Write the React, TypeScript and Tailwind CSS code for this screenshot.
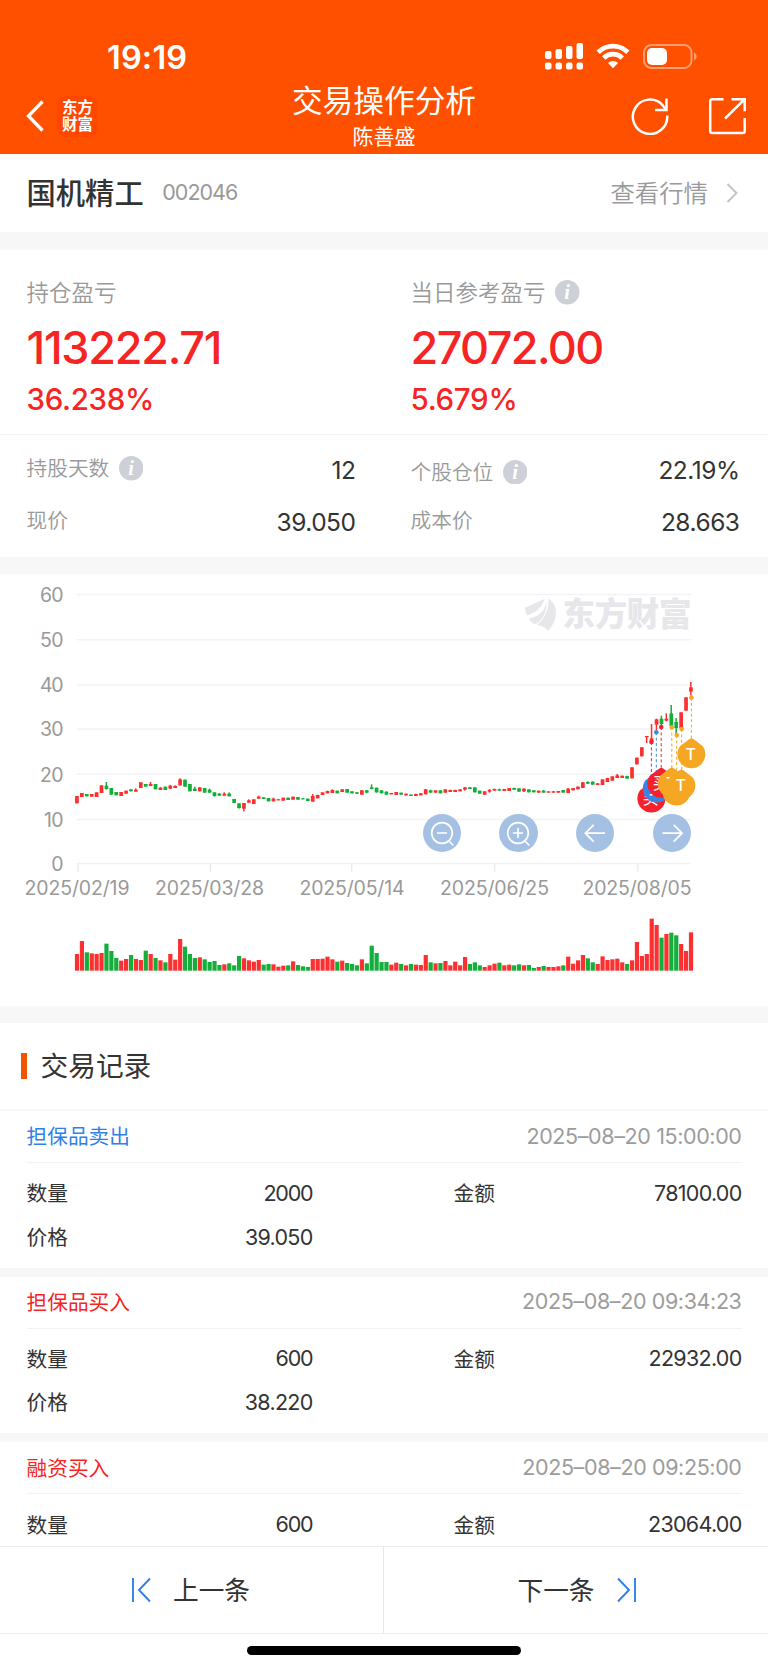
import React from "react";

const FONT = "font-['Inter','Noto_Sans_CJK_SC',sans-serif]";

/* Each day: colour, body top, body bottom, wick top, wick bottom, volume top (chart units, 3 per pixel). */
type Day = [string, number, number, number, number, number];
const DAYS: Day[] = [
  ["r",678,700,678,700,1152],["r",669,681,669,681,1113],["g",672,679,672,679,1147],["r",672,680,672,680,1150],["r",667,681,667,681,1152],
  ["r",646,669,646,669,1149],["g",647,657,636,659,1121],["g",654,674,654,674,1143],["g",666,676,666,676,1164],["r",666,678,666,678,1172],
  ["r",662,671,662,671,1167],["g",658,664,658,664,1155],["r",659,665,655,665,1167],["r",637,654,637,654,1170],["g",642,650,642,650,1142],
  ["r",642,648,636,648,1152],["g",642,658,642,658,1164],["r",653,660,651,660,1171],["g",650,660,650,660,1177],["r",647,656,645,657,1152],
  ["r",648,654,646,654,1169],["r",628,646,625,647,1107],["g",629,650,629,650,1130],["g",642,664,642,664,1152],["g",656,663,650,663,1164],
  ["r",652,664,652,664,1162],["g",654,668,654,668,1168],["g",659,668,656,668,1176],["g",667,678,667,680,1173],["g",671,677,669,677,1185],
  ["r",671,677,667,677,1183],["g",671,679,667,679,1180],["g",687,699,687,699,1186],["g",700,714,700,716,1158],["r",699,716,699,724,1165],
  ["r",691,698,688,698,1171],["r",688,702,688,702,1175],["r",680,686,677,686,1170],["g",682,687,682,687,1184],["g",684,694,684,694,1182],
  ["r",686,694,683,694,1183],["r",688,691,687,691,1190],["r",683,692,683,692,1187],["g",683,690,683,690,1186],["r",680,689,680,689,1174],
  ["g",681,689,681,689,1185],["g",685,688,684,688,1189],["g",686,693,686,693,1191],["r",678,695,672,695,1167],["r",675,685,674,685,1167],
  ["r",667,675,667,675,1166],["r",663,670,662,670,1160],["r",660,669,658,669,1168],["g",662,670,662,670,1175],["r",658,666,658,666,1172],
  ["g",657,668,657,668,1179],["g",664,670,664,670,1182],["g",667,671,666,672,1186],["r",661,674,660,674,1168],["g",661,668,660,670,1180],
  ["g",652,657,643,658,1127],["g",653,667,653,668,1149],["g",661,670,661,670,1176],["g",665,674,664,674,1176],["r",669,673,669,673,1184],
  ["r",666,675,666,675,1178],["g",668,674,668,674,1182],["r",671,676,671,677,1186],["g",674,678,673,678,1182],["r",672,678,671,678,1184],
  ["r",670,676,669,676,1185],["r",658,673,657,673,1155],["g",661,668,659,668,1177],["r",661,668,661,668,1180],["g",661,670,661,670,1179],
  ["r",658,668,658,668,1173],["r",660,666,659,666,1186],["r",660,666,659,666,1175],["r",658,664,658,664,1186],["r",652,659,651,662,1161],
  ["g",652,657,651,657,1182],["g",652,667,652,667,1177],["g",662,671,662,671,1186],["r",664,674,664,674,1191],["r",660,665,657,668,1186],
  ["r",657,662,656,662,1181],["g",658,662,656,662,1178],["r",657,663,657,663,1186],["r",654,663,654,663,1184],["g",654,659,653,660,1186],
  ["g",655,665,655,665,1183],["r",656,664,655,666,1186],["g",658,667,658,667,1185],["g",661,667,660,667,1194],["r",662,668,662,668,1191],
  ["g",662,668,660,668,1188],["r",664,668,664,668,1191],["r",664,668,663,668,1191],["r",663,668,663,668,1189],["g",660,668,660,668,1186],
  ["r",656,669,654,669,1160],["r",654,661,654,661,1181],["r",650,658,649,658,1171],["r",637,654,636,654,1155],["g",636,641,634,642,1165],
  ["g",635,644,634,644,1177],["r",640,645,639,645,1182],["r",628,645,628,645,1159],["r",624,636,624,636,1170],["r",619,632,619,632,1168],
  ["r",616,624,612,624,1166],["r",617,624,617,624,1177],["g",618,626,617,626,1182],["r",592,625,592,625,1171],["r",563,583,563,583,1116],
  ["r",532,559,532,559,1158],["r",498,502,498,519,1152],["r",505,515,462,515,1046],["r",448,464,446,480,1065],["g",446,462,437,467,1103],
  ["r",446,452,430,454,1092],["g",430,468,405,470,1088],["g",456,474,444,492,1096],["r",427,475,427,475,1122],["r",382,422,382,422,1143],
  ["r",352,365,336,377,1087],
];
const dayX = (i: number) => 77 + i * 4.912;
const unitY = (v: number) => 570 + v / 3;
const paint = (c: string) => (c === "r" ? "#fc3030" : "#14ae3a");

const GRID = [
  ["60", 594.5], ["50", 639.7], ["40", 685], ["30", 729], ["20", 774.2], ["10", 819.5], ["0", 863.5],
] as const;
const DATES = [
  ["2025/02/19", 78, 24.5, 105], ["2025/03/28", 210.4, 155, 109], ["2025/05/14", 351.7, 299.5, 105],
  ["2025/06/25", 494.6, 440, 109], ["2025/08/05", 637.8, 582.5, 109],
] as const;

function Guide({ x, y, to, color }: { x: number; y: number; to: number; color: string }) {
  return (
    <g>
      <line x1={x} x2={x} y1={y} y2={to} stroke={color} strokeWidth="1" strokeDasharray="3 2.4" />
      <circle cx={x} cy={y} r="2.3" fill={color} />
    </g>
  );
}

function Pin({ x, y, color, label }: { x: number; y: number; color: string; label?: string }) {
  return (
    <g>
      <path d={`M${x} ${y - 15.6}q1.4 0 3 1.6l8.5 6.5a14 14 0 1 1-23 0l8.5-6.5q1.6-1.6 3-1.6z`} fill={color} />
      {label && (
        <text x={x - 0.6} y={y + 5.8} fontSize="16" fontWeight={label === "T" ? 500 : 400} textAnchor="middle" fill="#fff">{label}</text>
      )}
    </g>
  );
}

function Chart() {
  return (
    <svg className="block h-[432px] w-[768px]" viewBox="0 574 768 432">
      {GRID.map(([t, y]) => (
        <g key={t}>
          <line x1="77" x2="691" y1={y} y2={y} stroke="#f2f2f4" strokeWidth="1.4" />
          <text x="63.5" y={y + 7.3} fontSize="19.5" textAnchor="end" fill="#999" textLength={t === "0" ? 11.4 : t === "10" ? 19.5 : 23.4}>{t}</text>
        </g>
      ))}
      {DATES.map(([t, tick, x, w]) => (
        <g key={t}>
          <line x1={tick} x2={tick} y1="863.5" y2="872.3" stroke="#ebebee" strokeWidth="1.4" />
          <text x={x} y="894.8" fontSize="19.5" fill="#999" textLength={w}>{t}</text>
        </g>
      ))}
      <g fill="#e6e6eb">
        <path d="M525.5 607c6-1.500 10-4.200 19-8-2.500 9-10 14.500-17.500 16.500-1.300-2.500-1.800-5-1.500-8.500z" />
        <path d="M546.500 598.500c.5 11-7 18.500-17.500 19.700.6 2.500 3 4.600 6.200 6.300 8-4.500 12.500-14 11.300-26z" />
        <path d="M548.500 598.500c6.500 4.500 8.500 11 7 18.500-1.300 6-4 10-7.500 14-2-3.500-6-5.500-11-6 7.500-6 12-15 11.500-26.500z" />
        <text x="562.5" y="626.300" fontSize="32.500" fontWeight="900" textLength="129">东方财富</text>
      </g>
      {DAYS.map(([c, t, b, hi, lo, v], i) => (
        <g key={i} fill={paint(c)}>
          <rect x={dayX(i) - 1.9} y={unitY(t)} width="3.7" height={(b - t) / 3} />
          <rect x={dayX(i) - 0.9} y={unitY(hi)} width="1.5" height={(lo - hi) / 3} />
          <rect x={dayX(i) - 2.1} y={unitY(v)} width="4.2" height={(1202 - v) / 3} />
        </g>
      ))}
      <Guide x={651.4} y={742} to={784} color="#f5222d" />
      <Guide x={656.3} y={732.2} to={774} color="#3a8ae8" />
      <Guide x={661.2} y={727} to={770} color="#f5222d" />
      <Guide x={671.8} y={727.2} to={770} color="#f5a623" />
      <Guide x={676.7} y={735} to={774} color="#f5a623" />
      <Guide x={681.7} y={729} to={772} color="#f5a623" />
      <Guide x={691.4} y={697.6} to={740} color="#f5a623" />
      <Pin x={651.4} y={798} color="#f5222d" label="买" />
      <Pin x={656.8} y={788} color="#3a84e3" label="卖" />
      <Pin x={661.3} y={783.3} color="#f5222d" label="买" />
      <Pin x={671.8} y={783} color="#f5a623" label="T" />
      <Pin x={676.4} y={791} color="#f5a623" />
      <Pin x={681.3} y={785} color="#f5a623" label="T" />
      <Pin x={691.4} y={753.800} color="#f5a623" label="T" />
    </svg>
  );
}

const ICONS: Record<string, React.ReactNode> = {
  minus: <><circle cx="19" cy="19" r="10.300" /><path d="M14 19h10M26.500 27.500l3.800 4" /></>,
  plus: <><circle cx="19" cy="19" r="10.300" /><path d="M14 19h10M19 14v10M26.500 27.500l3.800 4" /></>,
  left: <path d="M29 19.200H9.500M17.700 10.800L9.300 19.200l8.400 8.500" />,
  right: <path d="M9.500 19.200H29M20.700 10.800l8.400 8.400-8.400 8.500" />,
};

function ChartButton({ kind }: { kind: string }) {
  return (
    <button className="size-[38.5px] rounded-full bg-[#a4c1e4]">
      <svg className="block size-full" viewBox="0 0 38.500 38.500" fill="none" stroke="#fff" strokeWidth="1.700">{ICONS[kind]}</svg>
    </button>
  );
}

function Info() {
  return (
    <svg className="ml-[9.500px] size-[24.500px]" viewBox="0 0 24 24">
      <circle cx="12" cy="12" r="12" fill="#cdd0d6" />
      <text x="11.900" y="18.300" fontSize="20" fontWeight="700" fontStyle="italic" textAnchor="middle" fill="#fff" fontFamily="Liberation Serif, serif">i</text>
    </svg>
  );
}

function Label({ children, info, drop }: { children: string; info?: boolean; drop?: boolean }) {
  return (
    <div className={`flex items-center text-[20.700px] font-[350] text-[#999] ${drop ? "pt-[7px]" : ""}`}>
      <span className="pt-[2px]">{children}</span>
      {info && <Info />}
    </div>
  );
}

function Value({ children }: { children: string }) {
  return <span className="pt-[3px] text-[24.500px] tracking-[-0.02em] text-[#333]">{children}</span>;
}

function Record({ kind, color, time, qty, amount, price }: { kind: string; color: string; time: string; qty: string; amount: string; price: string }) {
  return (
    <div className="h-[165.700px] shrink-0 border-b-[9px] border-[#f7f7f8] px-[26.500px] text-[20.700px] text-[#333]">
      <div className="flex h-[52px] items-center justify-between border-b border-[#f2f2f4]">
        <span className={`pt-[2px] ${color}`}>{kind}</span>
        <span className="text-[21.500px] tracking-[-0.018em] text-[#9c9c9c]">{time}</span>
      </div>
      <div className="flex h-[61px] items-center">
        <span className="flex w-[286px] items-center justify-between"><span className="pt-[2px]">数量</span><span className="text-[21.500px] tracking-[-0.055em]">{qty}</span></span>
        <span className="ml-[141px] flex flex-1 items-center justify-between"><span className="pt-[2px]">金额</span><span className="text-[21.500px] tracking-[-0.034em]">{amount}</span></span>
      </div>
      <div className="-mt-2 flex h-[43px] w-[286px] items-center justify-between"><span className="pt-[1px]">价格</span><span className="text-[21.500px] tracking-[-0.034em]">{price}</span></div>
    </div>
  );
}

export default function App() {
  return (
    <div className={`flex h-[1669px] w-[768px] flex-col overflow-hidden bg-white leading-none ${FONT}`}>
      <header className="h-[153.500px] shrink-0 bg-[#ff5000] text-white">
        <div className="flex h-[80px] items-start justify-between pr-[71px] pl-[107px]">
          <span className="mt-[41.500px] text-[32.500px] font-semibold tracking-[0.005em]">19:19</span>
          <div className="mt-[42px] flex items-start">
            <svg className="h-[29px] w-[40px]" viewBox="0 0 40 29" fill="#fff">
              <rect x="1" y="9" width="6.500" height="8" rx="2" /><rect x="11.500" y="7" width="6.500" height="10" rx="2" />
              <rect x="22" y="4" width="6.500" height="13" rx="2" /><rect x="32.500" y="1" width="6.500" height="16" rx="2" />
              <rect x="1" y="20.500" width="6.500" height="7" rx="2" /><rect x="11.500" y="20.500" width="6.500" height="7" rx="2" />
              <rect x="22" y="20.500" width="6.500" height="7" rx="2" /><rect x="32.500" y="20.500" width="6.500" height="7" rx="2" />
            </svg>
            <svg className="ml-[12px] h-[28px] w-[34px]" viewBox="0 0 34 28" fill="none" stroke="#fff" strokeWidth="4.800">
              <path d="M2.200 10.200a21.300 21.300 0 0 1 29.600 0" />
              <path d="M7.700 15.900a13.400 13.400 0 0 1 18.600 0" />
              <path d="M17 26.300l-5-5.300a7.300 7.300 0 0 1 10 0z" fill="#fff" stroke="none" />
            </svg>
            <svg className="ml-[13px] h-[28px] w-[54px]" viewBox="0 0 54 28">
              <rect x="1" y="3" width="47.500" height="23" rx="7.500" fill="none" stroke="#ff9d6d" strokeWidth="2" />
              <rect x="4" y="6" width="20" height="17" rx="5" fill="#fff" />
              <path d="M51 10.500c3.500 1.500 3.500 6.500 0 8z" fill="#ff9d6d" />
            </svg>
          </div>
        </div>
        <div className="grid h-[73px] grid-cols-[1fr_auto_1fr]">
          <div className="flex h-[72px] items-center pl-[26px]">
            <svg className="h-[32px] w-[18px]" viewBox="0 0 18 32" fill="none" stroke="#fff" strokeWidth="3.300"><path d="M16.500 1.500L2.500 16l14 14.500" /></svg>
            <div className="ml-[13px] flex size-[41px] flex-col items-center justify-center rounded-[9px] bg-[#ff4700] text-[15.500px] leading-[17px] font-bold">
              <span>东方</span><span>财富</span>
            </div>
          </div>
          <div className="flex flex-col items-center">
            <h1 className="mt-[4.500px] text-[30.700px] leading-[31px]">交易操作分析</h1>
            <p className="mt-[10px] text-[21px] leading-[21px]">陈善盛</p>
          </div>
          <div className="flex h-[71px] items-center justify-end pr-[22px]">
            <svg className="size-[38px]" viewBox="0 0 38 38" fill="none" stroke="#fff" strokeWidth="2.500">
              <path d="M36.200 18.500A17.200 17.200 0 1 1 31.800 8.200M35.500 1.500v11.500H24M35.500 13L30.500 7" />
            </svg>
            <svg className="ml-[39px] size-[38px]" viewBox="0 0 38 38" fill="none" stroke="#fff" strokeWidth="2.500">
              <path d="M15.500 2.200H4.200a2 2 0 0 0-2 2V34a2 2 0 0 0 2 2h30.500a2 2 0 0 0 2-2V21M23.500 2.200h13.200v12M36.700 2.200L17 21.500" />
            </svg>
          </div>
        </div>
      </header>

      <section className="flex h-[78.500px] shrink-0 items-center justify-between pr-[30px] pl-[26.500px]">
        <div className="flex items-center">
          <h2 className="pt-[2px] text-[29.300px] font-medium text-[#333]">国机精工</h2>
          <span className="ml-[18.500px] text-[21.500px] tracking-[-0.045em] text-[#999]">002046</span>
        </div>
        <div className="flex items-center text-[24.400px] font-[350] text-[#999]">
          <span className="pt-[1px]">查看行情</span>
          <svg className="ml-[18px] h-[20px] w-[12px]" viewBox="0 0 12 20" fill="none" stroke="#c4c4c4" strokeWidth="2"><path d="M1.500 1l9 9-9 9" /></svg>
        </div>
      </section>

      <section className="h-[325px] shrink-0 border-t-[18px] border-[#f7f7f8]">
        <div className="grid h-[184.500px] grid-cols-2 border-b border-[#f2f2f4]">
          <div className="pt-[30px] pl-[26.500px]">
            <div className="flex h-[25px] items-center text-[22.500px] font-[350] text-[#999]"><span className="pt-[2px]">持仓盈亏</span></div>
            <div className="mt-[20px] text-[45px] font-medium tracking-[-0.028em] text-[#f72424]">113222.71</div>
            <div className="mt-[15px] text-[29.500px] font-medium tracking-[-0.01em] text-[#f72424]">36.238%</div>
          </div>
          <div className="pt-[30px] pl-[26.500px]">
            <div className="flex h-[25px] items-center text-[22.500px] font-[350] text-[#999]"><span className="pt-[2px]">当日参考盈亏</span><Info /></div>
            <div className="mt-[20px] text-[45px] font-medium tracking-[-0.035em] text-[#f72424]">27072.00</div>
            <div className="mt-[15px] text-[29.500px] font-medium tracking-[-0.01em] text-[#f72424]">5.679%</div>
          </div>
        </div>
        <div className="grid grid-cols-[329px_329px] gap-x-[55px] pt-[8px] pl-[26.500px]">
          <div className="flex h-[52px] items-center justify-between"><Label info>持股天数</Label><Value>12</Value></div>
          <div className="flex h-[52px] items-center justify-between"><Label info drop>个股仓位</Label><Value>22.19%</Value></div>
          <div className="flex h-[52px] items-center justify-between"><Label>现价</Label><Value>39.050</Value></div>
          <div className="flex h-[52px] items-center justify-between"><Label>成本价</Label><Value>28.663</Value></div>
        </div>
      </section>

      <section className="relative h-[449px] shrink-0 border-t-[17px] border-[#f7f7f8]">
        <Chart />
        <div className="absolute top-[239.500px] left-[422.500px] flex gap-[38.200px]">
          <ChartButton kind="minus" /><ChartButton kind="plus" /><ChartButton kind="left" /><ChartButton kind="right" />
        </div>
      </section>

      <section className="flex min-h-0 flex-1 flex-col overflow-hidden border-t-[17px] border-[#f7f7f8]">
        <div className="flex h-[88px] shrink-0 items-center border-b-2 border-[#f7f7f8] pl-[21px]">
          <span className="h-[26.500px] w-[5.500px] bg-[#f05500]" />
          <h2 className="ml-[14px] pt-[2px] text-[27.700px] text-[#333]">交易记录</h2>
        </div>
        <Record kind="担保品卖出" color="text-[#3080e8]" time="2025–08–20 15:00:00" qty="2000" amount="78100.00" price="39.050" />
        <Record kind="担保品买入" color="text-[#f72424]" time="2025–08–20 09:34:23" qty="600" amount="22932.00" price="38.220" />
        <Record kind="融资买入" color="text-[#f72424]" time="2025–08–20 09:25:00" qty="600" amount="23064.00" price="38.440" />
      </section>

      <footer className="h-[123px] shrink-0">
        <div className="grid h-[88px] grid-cols-2 border-y border-[#ededf0] text-[25.700px] text-[#333]">
          <button className="flex items-center border-r border-[#e8e8eb] pl-[131px]">
            <svg className="mr-[21px] h-[26px] w-[21px]" viewBox="0 0 21 26" fill="none" stroke="#3080e8" strokeWidth="1.900"><path d="M2 1v24M19 1.500L8 13l11 11.500" /></svg>
            <span className="pt-[2px]">上一条</span>
          </button>
          <button className="flex items-center pl-[133.500px]">
            <span className="pt-[2px]">下一条</span>
            <svg className="ml-[21px] h-[26px] w-[21px]" viewBox="0 0 21 26" fill="none" stroke="#3080e8" strokeWidth="1.900"><path d="M19 1v24M2 1.500L13 13 2 24.500" /></svg>
          </button>
        </div>
        <div className="mx-auto mt-[11.500px] h-[9px] w-[274px] rounded-full bg-black" />
      </footer>
    </div>
  );
}
